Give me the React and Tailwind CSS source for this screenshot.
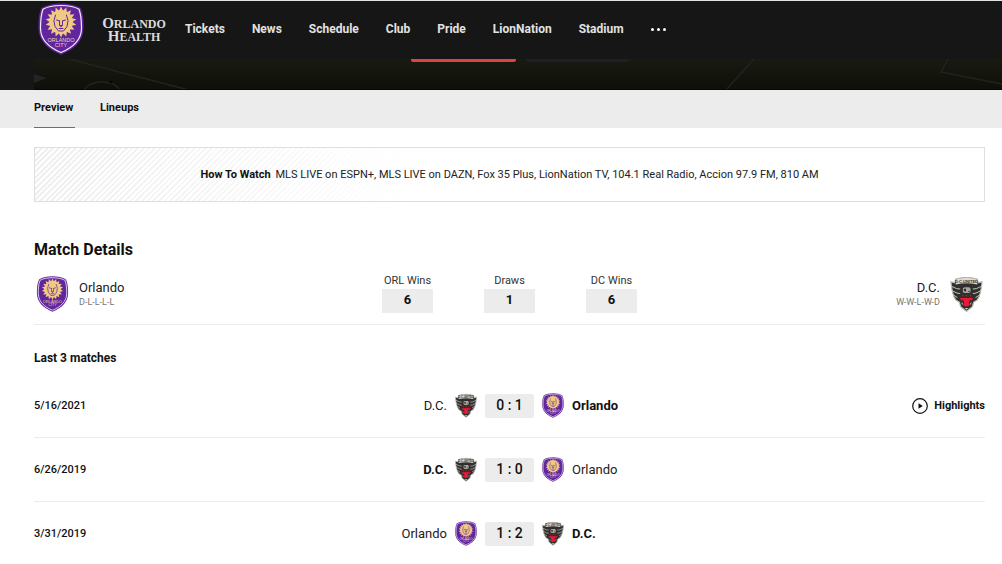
import React from "react";

const RAYS = Array.from({ length: 18 }, (_, i) => i * 20);

function OrlandoCrest({ className }) {
  return (
    <svg viewBox="0 0 46 52" className={className} role="img" aria-label="Orlando City">
      <path d="M23 0.500C16 0.500 8 2 3.500 5C0.500 12 0.500 18 0.500 25C0.500 38 10 46.500 23 51.700C36 46.500 45.500 38 45.500 25C45.500 18 45.500 12 42.500 5C38 2 30 0.500 23 0.500Z" fill="#61269e" />
      <path d="M23 2.500C17 2.500 9.500 3.500 5 6.200C2.500 13 2.500 19 2.500 25C2.500 36.800 11 44.500 23 49.500C35 44.500 43.500 36.800 43.500 25C43.500 19 43.500 13 41 6.200C36.500 3.500 29 2.500 23 2.500Z" fill="none" stroke="#f1e8f8" strokeWidth="1.200" />
      <g fill="#f0ca82">
        {RAYS.map((angle) => (
          <path key={angle} d="M20.400 9L23 3.500L25.600 9Z" transform={`rotate(${angle} 23 19)`} />
        ))}
        <circle cx="23" cy="19" r="11.800" />
      </g>
      <g fill="none" stroke="#61269e" strokeWidth="1" strokeLinecap="round">
        <path d="M17.500 12Q14.500 17.500 17 23.500L20.500 28H25.500L29 23.500Q31.500 17.500 28.500 12" />
        <path d="M18.500 17L21.500 18M27.500 17L24.500 18M21.500 18V22M24.500 18V22M21 25.500H25" />
      </g>
      <path d="M21 22H25L23 24.500Z" fill="#61269e" />
      <g fill="#ecd2ae" fontFamily="Liberation Sans, sans-serif" fontSize="5.500" textAnchor="middle">
        <text x="23" y="39">ORLANDO</text>
        <text x="23" y="44">CITY</text>
      </g>
    </svg>
  );
}

function DcCrest({ className }) {
  return (
    <svg viewBox="0 0 36 40" className={className} role="img" aria-label="D.C. United">
      <path d="M6 3.500C12 1 24 1 30 3.500L31 7.500L35.300 6.500L34.500 13L33.500 18L32 23L29.500 27L26 29L24.500 34L18 39.300L11.500 34L10 29L6.500 27L4 23L2.500 18L1.500 13L0.700 6.500L5 7.500Z" fill="#302f2d" stroke="#bbb7b1" strokeWidth="1.300" />
      <path d="M6.500 4C13 1.800 23 1.800 29.500 4L30 9.500C22 7.500 14 7.500 6 9.500Z" fill="#dedad4" />
      <text x="18" y="8" fill="#302f2d" fontFamily="Liberation Sans, sans-serif" fontWeight="700" fontSize="4.500" textAnchor="middle">D.C.UNITED</text>
      <g fill="none" stroke="#d6d2cb" strokeWidth="1">
        <path d="M1.500 11.500L7 14L11 14.500M2.500 16.500L7.500 19L11 19.500M4 21.500L8 24M34.500 11.500L29 14L25 14.500M33.500 16.500L28.500 19L25 19.500M32 21.500L28 24" />
      </g>
      <path d="M14 13.500L16 12.500H21L22.500 14V18L20.500 19H16L14 18Z" fill="#aaa69f" />
      <path d="M15 14.500L17.500 14V17.500L15 16.500ZM19.500 17.500L21.500 16V18Z" fill="#302f2d" />
      <path d="M13 22H14.500M17.300 22H18.700M21.500 22H23" stroke="#ef1737" strokeWidth="1.200" />
      <path d="M10.500 24.500H25.500L24 27H21.500L20.500 30L22 32.500L18 34L14 32.500L15.500 30L14.500 27H12Z" fill="#ef1737" />
      <path d="M12.500 29L14 30.500L13 32.500ZM23.500 29L22 30.500L23 32.500ZM16 35.500H20L18 37.500Z" fill="#c9c5be" />
    </svg>
  );
}

const CRESTS = { Orlando: OrlandoCrest, "D.C.": DcCrest };

const NAV = ["Tickets", "News", "Schedule", "Club", "Pride", "LionNation", "Stadium"];

const STATS = [
  { label: "ORL Wins", value: 6 },
  { label: "Draws", value: 1 },
  { label: "DC Wins", value: 6 },
];

const MATCHES = [
  { date: "5/16/2021", home: "D.C.", away: "Orlando", score: "0 : 1", winner: "Orlando", highlights: true },
  { date: "6/26/2019", home: "D.C.", away: "Orlando", score: "1 : 0", winner: "D.C." },
  { date: "3/31/2019", home: "Orlando", away: "D.C.", score: "1 : 2", winner: "D.C." },
];

function Header() {
  return (
    <header className="flex h-[59px] items-center border-t border-[#dfe5e3] bg-[#161616] pb-0.5 pl-[38px]">
      <a href="#home">
        <OrlandoCrest className="h-[52px] w-[46px]" />
      </a>
      <a
        href="#sponsor"
        className="ml-[17px] w-[66px] pt-0.5 text-center font-['Liberation_Serif',serif] text-xs leading-3 font-bold text-[#dcdcdc]"
      >
        <span className="block"><span className="text-[15px] leading-3">O</span>RLANDO</span>
        <span className="block"><span className="text-[15px] leading-3">H</span>EALTH</span>
      </a>
      <nav className="ml-[18px] flex items-center gap-[27px] text-xs font-bold text-[#e2e2e2]">
        {NAV.map((item) => (
          <a key={item} href={`#${item.toLowerCase()}`}>{item}</a>
        ))}
        <button type="button" aria-label="More" className="flex gap-[3px]">
          <span className="size-[3px] rounded-full bg-white" />
          <span className="size-[3px] rounded-full bg-white" />
          <span className="size-[3px] rounded-full bg-white" />
        </button>
      </nav>
    </header>
  );
}

function Hero() {
  return (
    <div className="bg-[#161616] pl-[34px]">
      <div className="relative h-[31px] overflow-hidden bg-linear-to-b from-[#191a11] to-[#0f0f0a]">
        <svg viewBox="0 0 968 31" preserveAspectRatio="xMinYMin slice" className="absolute inset-0 h-full w-full" aria-hidden="true">
          <g fill="none" stroke="#222320" strokeWidth="1.500">
            <path d="M35 0L155 31M720 0L692 31M914 0L907 13L968 25" />
            <path d="M50 31Q56 22 70 23Q82 24 86 31" />
          </g>
          <path d="M0 8L13 12L0 17Z" fill="#232425" transform="translate(0 7)" />
          <circle cx="77" cy="23" r="1.500" fill="#050505" />
          <path d="M0 30.500H968" stroke="#080507" />
        </svg>
        <div className="relative flex justify-center gap-[10px] pl-1">
          <span className="h-[3px] w-[105px] rounded-b-xs bg-[#dc4444]" />
          <span className="h-[3px] w-[103px] rounded-b-xs bg-[#1e1f23]" />
        </div>
      </div>
    </div>
  );
}

function Team({ name, bold }) {
  return <span className={bold ? "font-bold" : "text-[#222]"}>{name}</span>;
}

function MatchRow({ match }) {
  const HomeCrest = CRESTS[match.home];
  const AwayCrest = CRESTS[match.away];
  return (
    <li className="grid h-16 grid-cols-[1fr_auto_1fr] items-center border-b border-[#ececec]">
      <time className="text-[11px] leading-4 font-medium">{match.date}</time>
      <div className="grid grid-cols-[72px_22px_49px_22px_72px] items-center gap-2 text-[13px]">
        <span className="text-right"><Team name={match.home} bold={match.winner === match.home} /></span>
        <HomeCrest className="h-[25px] w-[22px]" />
        <span className="h-6 rounded-xs bg-[#ececec] text-center text-sm leading-[22px] font-medium">{match.score}</span>
        <AwayCrest className="h-[25px] w-[22px]" />
        <span><Team name={match.away} bold={match.winner === match.away} /></span>
      </div>
      {match.highlights && (
        <a href="#highlights" className="flex items-center gap-[6px] justify-self-end text-[11px] leading-4 font-bold">
          <svg viewBox="0 0 16 16" className="size-4" aria-hidden="true">
            <circle cx="8" cy="8" r="7.300" fill="none" stroke="#111" strokeWidth="1.200" />
            <path d="M6.500 5.300L10.800 8L6.500 10.700Z" fill="#111" />
          </svg>
          Highlights
        </a>
      )}
    </li>
  );
}

export default function App() {
  return (
    <div className="min-h-screen overflow-hidden bg-white font-[Roboto,sans-serif] text-[#111]">
      <Header />
      <Hero />
      <nav className="flex h-[38px] gap-[25px] bg-[#ececec] pl-[34px] text-[11px] font-bold">
        <a href="#preview" className="min-w-[41px] border-b border-[#d94141] leading-[35px]">Preview</a>
        <a href="#lineups" className="leading-[35px]">Lineups</a>
      </nav>
      <main className="pr-[17px] pl-[34px]">
        <section className="relative mt-[19px] flex h-[55px] items-center justify-center border border-[#dfdfdf]">
          <div className="absolute inset-y-0 left-0 w-2/5 bg-[repeating-linear-gradient(135deg,#efefef_0px,#efefef_2px,#fff_2px,#fff_4px)] mask-r-from-0%" />
          <p className="relative text-[11px] leading-4 text-[#222]">
            <strong className="mr-0.5 text-[#111]">How To Watch</strong>{" "}
            MLS LIVE on ESPN+, MLS LIVE on DAZN, Fox 35 Plus, LionNation TV, 104.1 Real Radio, Accion 97.9 FM, 810 AM
          </p>
        </section>

        <h2 className="mt-9 text-base leading-6 font-bold">Match Details</h2>
        <section className="mt-2 grid grid-cols-[1fr_auto_1fr] border-b border-[#ececec] pt-1 pb-[11px]">
          <div className="flex items-center gap-2">
            <OrlandoCrest className="h-9 w-[37px]" />
            <div>
              <p className="text-[13px] leading-4 text-[#222]">Orlando</p>
              <p className="text-[9px] leading-3 text-[#777]">D-L-L-L-L</p>
            </div>
          </div>
          <dl className="flex gap-[51px] text-center">
            {STATS.map((stat) => (
              <div key={stat.label} className="w-[51px]">
                <dt className="text-[11px] leading-[14px] whitespace-nowrap text-[#333]">{stat.label}</dt>
                <dd className="mt-px h-6 bg-[#ececec] text-[13px] leading-[22px] font-bold">{stat.value}</dd>
              </div>
            ))}
          </dl>
          <div className="flex items-center justify-end gap-2 text-right">
            <div>
              <p className="text-[13px] leading-4 text-[#222]">D.C.</p>
              <p className="text-[9px] leading-3 text-[#777]">W-W-L-W-D</p>
            </div>
            <DcCrest className="h-9 w-[37px]" />
          </div>
        </section>

        <h3 className="mt-[23px] text-xs leading-5 font-bold">Last 3 matches</h3>
        <ul className="mt-[6px]">
          {MATCHES.map((match) => (
            <MatchRow key={match.date} match={match} />
          ))}
        </ul>
      </main>
    </div>
  );
}
